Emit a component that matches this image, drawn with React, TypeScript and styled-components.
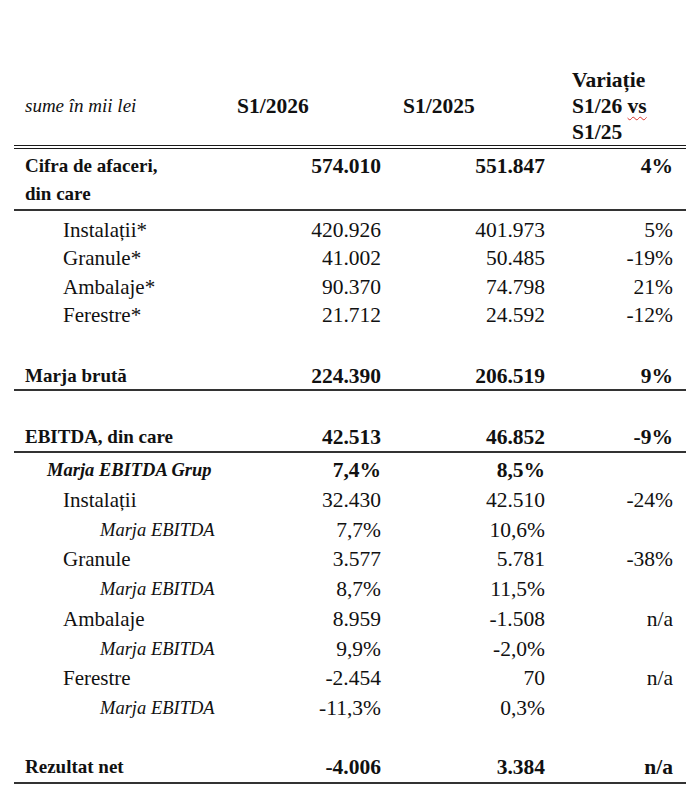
import React from 'react';
import styled, { createGlobalStyle, css } from 'styled-components';

const GlobalStyle = createGlobalStyle`
  html, body {
    margin: 0;
    padding: 0;
    background: #ffffff;
  }
  body {
    font-family: 'Liberation Serif', 'Times New Roman', serif;
    color: #111111;
  }
`;

type Col = 1 | 2 | 3;
type Kind = 'total' | 'segment' | 'group' | 'margin';
type Rule = 'none' | 'single' | 'double';

const Page = styled.div`
  width: 700px;
  height: 802px;
  padding: 67px 14px 0;
  box-sizing: border-box;
`;

const Table = styled.div`
  display: flex;
  flex-direction: column;
  width: 672px;
`;

const Row = styled.div<{ $h?: number; $rule?: Rule; $top?: number; $wrap?: boolean }>`
  display: grid;
  grid-template-columns: 205px 158px 164px 134px;
  padding: ${(p) => (p.$wrap ? '3px 0 1px 11px' : '0 0 0 11px')};
  align-items: ${(p) => (p.$wrap ? 'start' : 'center')};
  height: ${(p) => (p.$h ? `${p.$h}px` : 'auto')};
  margin-top: ${(p) => p.$top ?? 0}px;
  line-height: 28px;
  ${(p) =>
    p.$rule === 'single' &&
    css`
      border-bottom: 2px solid #333333;
    `}
  ${(p) =>
    p.$rule === 'double' &&
    css`
      border-bottom: 4px double #1a1a1a;
    `}
`;

const padFor: Record<Col, string> = {
  1: '0 7px 0 7px',
  2: '0 7px 0 15px',
  3: '0 13px 0 20px',
};

const Cell = styled.div<{ $col: Col; $bold?: boolean }>`
  padding: ${(p) => padFor[p.$col]};
  text-align: right;
  font-size: 21.5px;
  font-weight: ${(p) => (p.$bold ? 700 : 400)};
  white-space: nowrap;
`;

const labelStyle: Record<Kind, { indent: number; size: number; bold: boolean; italic: boolean }> = {
  total: { indent: 0, size: 19, bold: true, italic: false },
  segment: { indent: 38, size: 21, bold: false, italic: false },
  group: { indent: 22, size: 18.5, bold: true, italic: true },
  margin: { indent: 75, size: 18.5, bold: false, italic: true },
};

const Label = styled.div<{ $kind: Kind }>`
  padding-left: ${(p) => labelStyle[p.$kind].indent}px;
  font-size: ${(p) => labelStyle[p.$kind].size}px;
  font-weight: ${(p) => (labelStyle[p.$kind].bold ? 700 : 400)};
  font-style: ${(p) => (labelStyle[p.$kind].italic ? 'italic' : 'normal')};
  white-space: nowrap;
`;

const Units = styled.div`
  font-size: 19px;
  font-style: italic;
`;

const HeadCell = styled.div<{ $col: Col }>`
  padding: ${(p) => padFor[p.$col]};
  font-weight: 700;
  font-size: 21.5px;
  line-height: 26px;
`;

const Squiggle = styled.span`
  text-decoration: underline wavy #d9342b;
  text-decoration-thickness: 1px;
  text-underline-offset: 3px;
`;

interface Line {
  label: string;
  kind: Kind;
  a: string;
  b: string;
  c?: string;
}

const segments: Line[] = [
  { label: 'Instalații*', kind: 'segment', a: '420.926', b: '401.973', c: '5%' },
  { label: 'Granule*', kind: 'segment', a: '41.002', b: '50.485', c: '-19%' },
  { label: 'Ambalaje*', kind: 'segment', a: '90.370', b: '74.798', c: '21%' },
  { label: 'Ferestre*', kind: 'segment', a: '21.712', b: '24.592', c: '-12%' },
];

const ebitdaLines: Line[] = [
  { label: 'Marja EBITDA Grup', kind: 'group', a: '7,4%', b: '8,5%' },
  { label: 'Instalații', kind: 'segment', a: '32.430', b: '42.510', c: '-24%' },
  { label: 'Marja EBITDA', kind: 'margin', a: '7,7%', b: '10,6%' },
  { label: 'Granule', kind: 'segment', a: '3.577', b: '5.781', c: '-38%' },
  { label: 'Marja EBITDA', kind: 'margin', a: '8,7%', b: '11,5%' },
  { label: 'Ambalaje', kind: 'segment', a: '8.959', b: '-1.508', c: 'n/a' },
  { label: 'Marja EBITDA', kind: 'margin', a: '9,9%', b: '-2,0%' },
  { label: 'Ferestre', kind: 'segment', a: '-2.454', b: '70', c: 'n/a' },
  { label: 'Marja EBITDA', kind: 'margin', a: '-11,3%', b: '0,3%' },
];

const DataRow = ({ line, h, top, rule }: { line: Line; h: number; top?: number; rule?: Rule }) => {
  const bold = line.kind === 'total' || line.kind === 'group';
  return (
    <Row $h={h} $top={top} $rule={rule}>
      <Label $kind={line.kind}>{line.label}</Label>
      <Cell $col={1} $bold={bold}>{line.a}</Cell>
      <Cell $col={2} $bold={bold}>{line.b}</Cell>
      <Cell $col={3} $bold={bold}>{line.c ?? ''}</Cell>
    </Row>
  );
};

const App = (): JSX.Element => (
  <Page>
    <GlobalStyle />
    <Table>
      <Row $h={78} $rule="double">
        <Units>sume în mii lei</Units>
        <HeadCell $col={1}>S1/2026</HeadCell>
        <HeadCell $col={2}>S1/2025</HeadCell>
        <HeadCell $col={3}>
          Variație
          <br />
          S1/26 <Squiggle>vs</Squiggle>
          <br />
          S1/25
        </HeadCell>
      </Row>

      <Row $wrap $rule="single">
        <Label $kind="total">
          Cifra de afaceri,
          <br />
          din care
        </Label>
        <Cell $col={1} $bold>574.010</Cell>
        <Cell $col={2} $bold>551.847</Cell>
        <Cell $col={3} $bold>4%</Cell>
      </Row>

      {segments.map((line, i) => (
        <DataRow key={line.label} line={line} h={28.33} top={i === 0 ? 5 : 0} />
      ))}

      <DataRow
        line={{ label: 'Marja brută', kind: 'total', a: '224.390', b: '206.519', c: '9%' }}
        h={27}
        top={33}
        rule="single"
      />

      <DataRow
        line={{ label: 'EBITDA, din care', kind: 'total', a: '42.513', b: '46.852', c: '-9%' }}
        h={28}
        top={32}
        rule="single"
      />

      {ebitdaLines.map((line, i) => (
        <DataRow key={`${line.label}-${i}`} line={line} h={29.75} top={i === 0 ? 2 : 0} />
      ))}

      <DataRow
        line={{ label: 'Rezultat net', kind: 'total', a: '-4.006', b: '3.384', c: 'n/a' }}
        h={30}
        top={29}
        rule="single"
      />
    </Table>
  </Page>
);

export default App;
